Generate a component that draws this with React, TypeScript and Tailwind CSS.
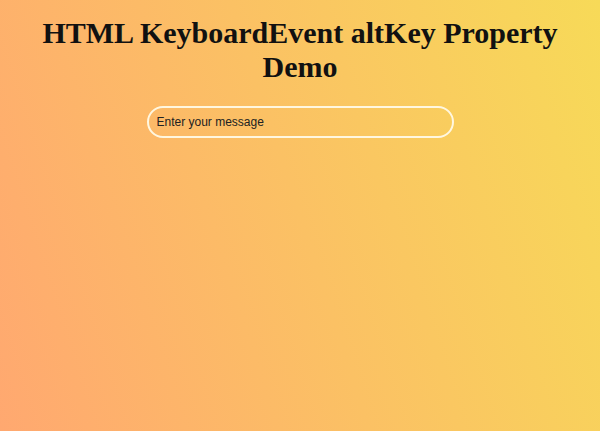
export default function App() {
  return (
    <div className="min-h-screen w-full bg-[linear-gradient(72deg,#ffa870,#f7da58)] flex flex-col items-center pt-4">
      <h1 className="text-center text-[30px] leading-[34px] font-bold text-[#111] px-10 font-['Liberation_Serif',serif]">
        HTML KeyboardEvent altKey Property Demo
      </h1>
      <input
        type="text"
        placeholder="Enter your message"
        className="mt-[22px] w-[307px] h-[32px] rounded-[16px] border-2 border-[#fff7e0] bg-transparent px-2 text-[12px] text-[#222] placeholder:text-[#222] outline-none font-['Liberation_Sans',Arial,sans-serif]"
      />
    </div>
  )
}
